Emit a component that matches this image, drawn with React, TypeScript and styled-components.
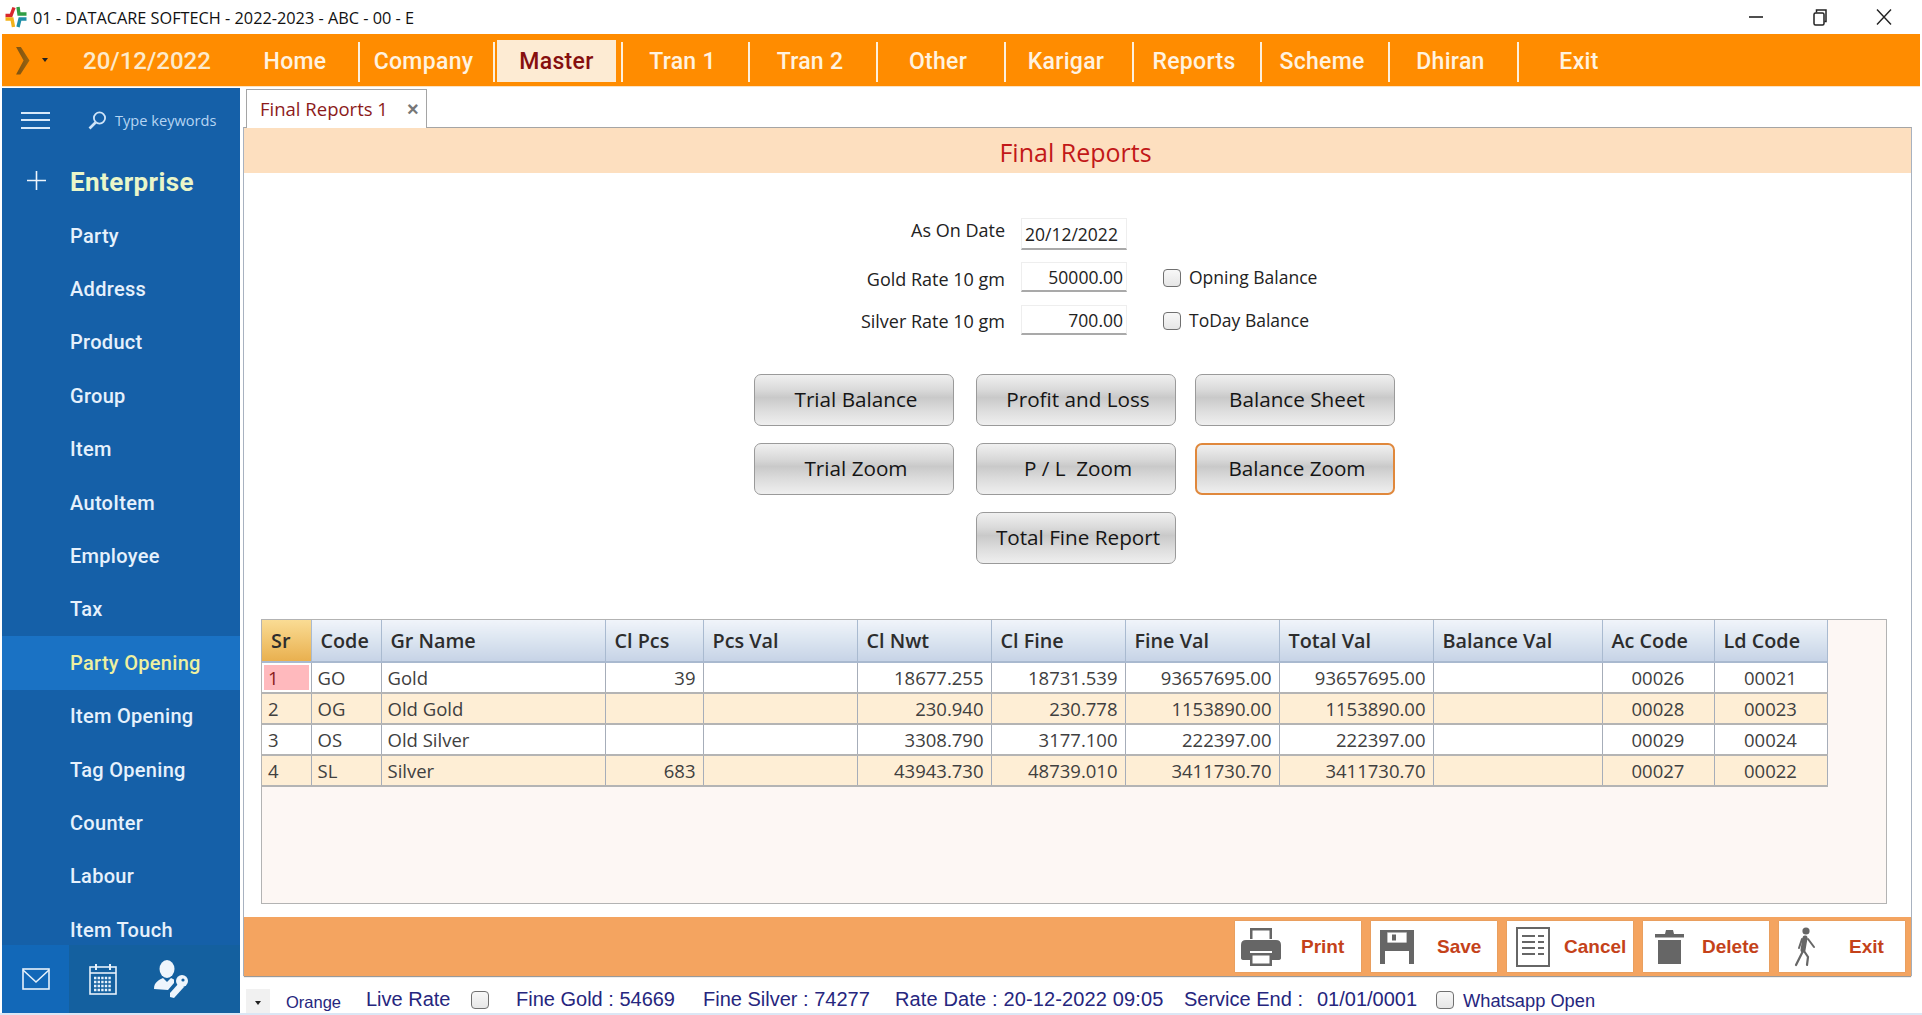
import React from "react";
import styled, { createGlobalStyle, css } from "styled-components";

const Global = createGlobalStyle`
  html, body { margin: 0; padding: 0; background: #fff; }
  #root { width: 1922px; height: 1015px; }
  * { box-sizing: border-box; }
`;

const UI = `"Open Sans", "Liberation Sans", sans-serif`;
const MENU = `Roboto, "Open Sans", sans-serif`;

const Page = styled.div`
  position: relative;
  width: 1922px;
  height: 1015px;
  overflow: hidden;
  background: #fff;
  font-family: ${UI};
`;

/* Title bar */
const TitleBar = styled.div`
  height: 34px;
  display: flex;
  align-items: center;
  padding-left: 4px;
`;
const TitleText = styled.div`
  margin-left: 5px;
  margin-top: 2px;
  font-size: 16.3px;
  color: #111;
  white-space: nowrap;
`;
const WindowControls = styled.div`
  margin-left: auto;
  display: flex;
  align-items: center;
  height: 34px;
  padding-right: 6px;
`;
const WindowButton = styled.div`
  width: 64px;
  display: flex;
  justify-content: center;
  align-items: center;
  color: #222;
`;

/* Menu */
const MenuBar = styled.div`
  margin-left: 2px;
  width: 1918px;
  height: 52px;
  background: #ff8c00;
  display: flex;
  padding-top: 6px;
  box-shadow: 0 1px 0 #fbe3c4;
`;
const Brand = styled.div`
  width: 236px;
  height: 42px;
  display: flex;
  align-items: center;
  padding-left: 13px;
`;
const Caret = styled.div`
  margin-left: 12px;
  margin-top: -2px;
  width: 0;
  height: 0;
  border-left: 3.5px solid transparent;
  border-right: 3.5px solid transparent;
  border-top: 4px solid #222;
`;
const DateText = styled.div`
  margin-left: 35px;
  font-family: ${MENU};
  font-size: 24px;
  font-weight: 500;
  color: #fdeacb;
  white-space: nowrap;
`;
const MenuItem = styled.div<{ $w: number; $last?: boolean }>`
  position: relative;
  width: ${(p) => p.$w}px;
  height: 42px;
  ${(p) =>
    !p.$last &&
    css`
      &::after {
        content: "";
        position: absolute;
        right: 0;
        top: 2px;
        bottom: 0;
        width: 2px;
        background: #fdf0dc;
      }
    `}
`;
const MenuLabel = styled.div<{ $active?: boolean }>`
  height: 42px;
  margin: 0 ${(p) => (p.$active ? 7 : 10)}px 0 2px;
  display: flex;
  align-items: center;
  justify-content: center;
  font-family: ${MENU};
  font-size: 23px;
  font-weight: 500;
  letter-spacing: 0.3px;
  color: ${(p) => (p.$active ? "#860f0f" : "#fff3e0")};
  background: ${(p) => (p.$active ? "#fdebd3" : "transparent")};
`;

/* Body */
const Body = styled.div`
  display: flex;
  margin-top: 2px;
  height: 925px;
`;
const Sidebar = styled.nav`
  margin-left: 2px;
  width: 238px;
  height: 925px;
  background: #1560a8;
  display: flex;
  flex-direction: column;
  font-family: ${MENU};
`;
const SideTop = styled.div`
  height: 64px;
  display: flex;
  align-items: center;
  padding-left: 19px;
`;
const Burger = styled.div`
  width: 29px;
  height: 17px;
  border-top: 2px solid #d8e9fa;
  border-bottom: 2px solid #d8e9fa;
  position: relative;
  &::after {
    content: "";
    position: absolute;
    left: 0;
    right: 0;
    top: 5.5px;
    height: 2px;
    background: #d8e9fa;
  }
`;
const SearchWrap = styled.div`
  margin-left: 38px;
  display: flex;
  align-items: center;
`;
const SearchHint = styled.div`
  margin-left: 8px;
  font-family: ${UI};
  font-size: 14.6px;
  color: #b5d5f3;
  white-space: nowrap;
`;
const GroupRow = styled.div`
  height: 57px;
  display: flex;
  align-items: center;
  padding-left: 25px;
`;
const GroupName = styled.div`
  margin-left: 24px;
  margin-top: 2px;
  font-size: 26px;
  font-weight: 700;
  letter-spacing: 0.4px;
  color: #e9f6c9;
`;
const SideList = styled.div`
  flex: 1;
  overflow: hidden;
`;
const SideItem = styled.div<{ $active?: boolean }>`
  height: 53.4px;
  display: flex;
  align-items: center;
  padding-left: 68px;
  font-size: 20px;
  font-weight: 500;
  letter-spacing: 0.3px;
  color: ${(p) => (p.$active ? "#eef0a0" : "#e6f1fc")};
  background: ${(p) => (p.$active ? "#1a72c4" : "transparent")};
`;
const SideBottom = styled.div`
  height: 68px;
  display: flex;
  background: #14609f;
`;
const SideTile = styled.div<{ $active?: boolean; $nudge?: number }>`
  width: 67px;
  display: flex;
  align-items: center;
  justify-content: center;
  padding-left: ${(p) => p.$nudge ?? 0}px;
  color: #eaf3fc;
  background: ${(p) => (p.$active ? "#1268b8" : "transparent")};
`;

/* Main */
const Main = styled.main`
  flex: 1;
  padding-left: 3px;
  padding-right: 10px;
  display: flex;
  flex-direction: column;
  min-width: 0;
`;
const TabStrip = styled.div`
  height: 39px;
  display: flex;
  padding-left: 3px;
  padding-top: 1px;
`;
const Tab = styled.div`
  width: 181px;
  height: 39px;
  margin-bottom: -1px;
  background: #fff;
  border: 1px solid #a5a5a5;
  border-bottom: none;
  display: flex;
  align-items: center;
  padding-left: 13px;
  position: relative;
  z-index: 1;
`;
const TabText = styled.div`
  font-size: 18.5px;
  color: #8c1a1a;
  white-space: nowrap;
  margin-top: -2px;
`;
const TabClose = styled.div`
  position: absolute;
  left: 160px;
  top: 9px;
  font-family: "Liberation Sans", sans-serif;
  font-size: 20px;
  font-weight: 700;
  line-height: 20px;
  color: #777;
`;
const Panel = styled.section`
  height: 850px;
  border: 1px solid #a8b2c0;
  border-top-color: #a5a5a5;
  border-bottom: none;
  display: flex;
  flex-direction: column;
  background: #fff;
`;
const PanelHeader = styled.div`
  height: 45px;
  flex: none;
  background: #fddfbf;
  display: flex;
  align-items: center;
  justify-content: center;
  font-size: 25px;
  color: #c21818;
  padding: 2px 4px 0 0;
`;
const Form = styled.div`
  margin: 45px 0 0 456px;
  display: grid;
  grid-template-columns: 305px 106px 18px auto;
  grid-template-rows: 44px 43px 31px;
  column-gap: 16px;
  justify-content: start;
`;
const FieldLabel = styled.div<{ $up?: number }>`
  text-align: right;
  font-size: 18px;
  line-height: 24px;
  color: #222;
  white-space: nowrap;
  margin-top: ${(p) => p.$up ?? 3}px;
`;
const FieldBox = styled.div<{ $right?: boolean; $h: number }>`
  width: 106px;
  height: ${(p) => p.$h}px;
  background: #fff;
  border: 1px solid #eeeeee;
  border-bottom: 2px solid #a9a9a9;
  display: flex;
  align-items: center;
  justify-content: ${(p) => (p.$right ? "flex-end" : "flex-start")};
  padding: 0 3px 0 3px;
  font-size: 17.5px;
  color: #222;
`;
const CheckBox = styled.input.attrs({ type: "checkbox" })`
  appearance: none;
  -webkit-appearance: none;
  width: 18px;
  height: 18px;
  margin: 0;
  border: 1.5px solid #707070;
  border-radius: 4px;
  background: linear-gradient(#f8f8f8, #e6e6e6);
`;
const FormCheck = styled(CheckBox)`
  margin-top: 7px;
  margin-left: 20px;
`;
const CheckLabel = styled.div`
  margin-left: 12px;
  margin-top: 3px;
  font-size: 17.5px;
  line-height: 24px;
  color: #222;
  white-space: nowrap;
`;
const ButtonGrid = styled.div`
  margin: 38px 0 0 510px;
  display: grid;
  grid-template-columns: 222px 219px 200px;
  grid-template-rows: 69px 69px 52px;
  justify-content: start;
`;
const ActionButton = styled.div<{ $focus?: boolean; $col?: number }>`
  width: 200px;
  height: 52px;
  grid-column: ${(p) => p.$col ?? "auto"};
  display: flex;
  align-items: center;
  justify-content: center;
  padding: 0 0 2px 4px;
  border: ${(p) => (p.$focus ? "2px solid #e0883c" : "1.5px solid #9a9a9a")};
  border-radius: 7px;
  background: linear-gradient(#f0f0f0 0%, #d9d9d9 30%, #c9c9c9 45%, #dcdcdc 70%, #efefef 100%);
  font-size: 20.7px;
  color: #151515;
  white-space: pre;
`;
const GridBox = styled.div`
  margin: 55px 0 0 17px;
  width: 1626px;
  height: 285px;
  background: #fdf7f4;
  border: 1.5px solid #b3b3b3;
  flex: none;
`;
const GridTable = styled.table`
  border-collapse: collapse;
  table-layout: fixed;
  width: 1565px;
`;
const HeadCell = styled.th<{ $sel?: boolean; $w: number }>`
  width: ${(p) => p.$w}px;
  height: 42px;
  padding: 0 0 0 9px;
  text-align: left;
  font-size: 19.8px;
  font-weight: 600;
  color: #2d2d2d;
  white-space: nowrap;
  border-right: 1px solid #a9bad0;
  border-bottom: 2px solid #a9b9cf;
  background: ${(p) =>
    p.$sel
      ? "linear-gradient(#fadc94, #e9b04f)"
      : "linear-gradient(#f0f4fa, #dde6f1 45%, #c6d3e6)"};
`;
const Row = styled.tr<{ $alt?: boolean }>`
  height: 31px;
  background: ${(p) => (p.$alt ? "#feeed5" : "#ffffff")};
`;
const Cell = styled.td<{ $align?: string; $flag?: boolean }>`
  padding: 1px ${(p) => (p.$align === "right" ? 7 : 6)}px 0 6px;
  text-align: ${(p) => p.$align ?? "left"};
  font-size: 18.5px;
  line-height: 20px;
  color: ${(p) => (p.$flag ? "#8a1c1c" : "#404040")};
  white-space: nowrap;
  border-right: 1px solid #a6adb9;
  border-bottom: 2px solid #b4b4b4;
  ${(p) =>
    p.$flag &&
    css`
      background: #ffb9bd;
      box-shadow: inset 0 0 0 2px #fff;
    `}
`;

/* Footer */
const FooterBar = styled.div`
  margin-top: auto;
  height: 59px;
  flex: none;
  background: #f4a460;
  box-shadow: 0 1px 1px #999;
  display: flex;
  justify-content: flex-end;
  padding: 4px 6px 0 0;
  column-gap: 10px;
`;
const FooterButton = styled.div`
  width: 126px;
  height: 51px;
  background: #fff;
  box-shadow: 0 0 1px #b08a60;
  display: flex;
  align-items: center;
`;
const IconSlot = styled.div`
  width: 52px;
  display: flex;
  justify-content: center;
  color: #666;
`;
const FooterText = styled.div<{ $gap: number }>`
  margin-left: ${(p) => p.$gap}px;
  font-family: "Liberation Sans", sans-serif;
  font-size: 19px;
  font-weight: 700;
  color: #c4421a;
`;
const StatusBar = styled.div`
  height: 37px;
  padding-top: 10px;
  display: grid;
  grid-template-columns: 4px 40px 80px 105px 45px 187px 192px 289px 133px 119px 27px auto;
  align-items: center;
  font-family: "Liberation Sans", sans-serif;
  font-size: 20px;
  color: #26267e;
  white-space: nowrap;
  margin-left: -1px;
`;
const DropButton = styled.div`
  grid-column: 2;
  width: 24px;
  height: 24px;
  margin-top: 2px;
  background: #f1f1f1;
  display: flex;
  align-items: center;
  justify-content: center;
  &::after {
    content: "";
    border-left: 3.5px solid transparent;
    border-right: 3.5px solid transparent;
    border-top: 4px solid #222;
    margin-top: 5px;
  }
`;
const Theme = styled.div`
  font-size: 16.5px;
  margin-top: 6px;
`;
const RateDate = styled.div`
  letter-spacing: 0.14px;
`;
const StatusNote = styled.div`
  font-size: 18.3px;
  margin-top: 3px;
`;
const BottomEdge = styled.div`
  position: absolute;
  left: 0;
  right: 0;
  bottom: 0;
  height: 2px;
  background: #dbe7f5;
`;

const menus = [
  ["Home", 122], ["Company", 135], ["Master", 128], ["Tran 1", 127], ["Tran 2", 128], ["Other", 128],
  ["Karigar", 128], ["Reports", 128], ["Scheme", 128], ["Dhiran", 129], ["Exit", 128],
] as const;
const sideItems = [
  "Party", "Address", "Product", "Group", "Item", "AutoItem", "Employee", "Tax", "Party Opening",
  "Item Opening", "Tag Opening", "Counter", "Labour", "Item Touch",
];
const columns: [string, number][] = [
  ["Sr", 49], ["Code", 70], ["Gr Name", 224], ["Cl Pcs", 98], ["Pcs Val", 154], ["Cl Nwt", 134],
  ["Cl Fine", 134], ["Fine Val", 154], ["Total Val", 154], ["Balance Val", 169], ["Ac Code", 112], ["Ld Code", 113],
];
const rows = [
  ["1", "GO", "Gold", "39", "", "18677.255", "18731.539", "93657695.00", "93657695.00", "", "00026", "00021"],
  ["2", "OG", "Old Gold", "", "", "230.940", "230.778", "1153890.00", "1153890.00", "", "00028", "00023"],
  ["3", "OS", "Old Silver", "", "", "3308.790", "3177.100", "222397.00", "222397.00", "", "00029", "00024"],
  ["4", "SL", "Silver", "683", "", "43943.730", "48739.010", "3411730.70", "3411730.70", "", "00027", "00022"],
];
const alignFor = (i: number) => (i >= 10 ? "center" : i >= 3 && i <= 8 ? "right" : "left");

const Logo = () => (
  <svg width="24" height="24" viewBox="0 0 24 24" fill="none" strokeWidth="3.4">
    <path d="M1.5 10.5 H7 L10 2.5" stroke="#d8262c" />
    <path d="M14 2 L15 9 H22.5" stroke="#2f9e44" />
    <path d="M1.5 14 H8 L9.5 22" stroke="#f2b21b" />
    <path d="M22.5 14 H16 L14 22" stroke="#1f8fa8" />
  </svg>
);
const Chevron = () => (
  <svg width="15" height="28" viewBox="0 0 14 28" preserveAspectRatio="none">
    <defs>
      <linearGradient id="chev" x1="0" x2="1" y1="0" y2="0">
        <stop offset="0" stopColor="#7d5212" />
        <stop offset="1" stopColor="#9a6410" />
      </linearGradient>
    </defs>
    <path d="M1 0 H5.5 L13.5 13.5 L5 27.5 H1 L8 13.5 Z" fill="url(#chev)" />
  </svg>
);
const SearchIcon = () => (
  <svg width="19" height="19" viewBox="0 0 19 19" fill="none" stroke="#cfe4f8">
    <circle cx="11.5" cy="7" r="5.6" strokeWidth="1.8" />
    <path d="M7.5 11.5 L1.5 17.5" strokeWidth="2.6" />
  </svg>
);
const Plus = () => (
  <svg width="19" height="19" viewBox="0 0 19 19" stroke="#eef5fc" strokeWidth="1.6">
    <path d="M9.5 0 V19 M0 9.5 H19" />
  </svg>
);
const MailIcon = () => (
  <svg width="28" height="24" viewBox="0 0 28 24" fill="none" stroke="#e6f1fb" strokeWidth="1.6">
    <rect x="1" y="2" width="26" height="20" />
    <path d="M1 3 L14 15 L27 3" />
  </svg>
);
const CalendarIcon = () => (
  <svg width="28" height="32" viewBox="0 0 28 32" fill="none" stroke="#e6f1fb">
    <rect x="1" y="4" width="26" height="27" strokeWidth="1.6" />
    <path d="M1 10 H27" strokeWidth="1.6" />
    <path d="M7 1 V7 M21 1 V7" strokeWidth="2" />
    <path d="M5 15 H23 M5 19 H23 M5 23 H23 M5 27 H23" strokeWidth="2.4" strokeDasharray="2.4 1.2" />
  </svg>
);
const UserKeyIcon = () => (
  <svg width="38" height="38" viewBox="0 0 38 38" fill="#eef5fc">
    <ellipse cx="14" cy="9" rx="7.5" ry="9" />
    <path d="M1 29 C1 22 6 20 10 18 L14 22 L18 18 L21 19.5 L21 23 L15 30 Z" />
    <circle cx="29" cy="21" r="6" />
    <path d="M26 23 L31 27 L21 38 L17 37 L17 33 Z" />
    <circle cx="30" cy="20" r="1.6" fill="#14609f" />
  </svg>
);
const PrinterIcon = () => (
  <svg width="40" height="40" viewBox="0 0 40 40">
    <path d="M9 1 H31 V12 H28.5 V3.5 H11.5 V12 H9 Z" fill="#666" />
    <path d="M5 13 H35 Q40 13 40 18 V31 Q40 33 37 33 H31 V24 H9 V33 H3 Q0 33 0 31 V18 Q0 13 5 13 Z" fill="#666" />
    <path d="M9 26 H31 V39 H9 Z M11.5 28.5 V36.5 H28.5 V28.5 Z" fill="#666" fillRule="evenodd" />
  </svg>
);
const SaveIcon = () => (
  <svg width="34" height="34" viewBox="0 0 34 34">
    <path fill="#666" fillRule="evenodd" d="M0 0 H34 V34 H0 Z M7 2.5 V13 H27 V2.5 Z M5 21 V34 H29 V21 Z" />
    <rect x="12" y="4.5" width="4" height="6" fill="#666" />
    <path d="M7 2.5 V13 H27 V2.5" fill="none" stroke="#666" strokeWidth="0.8" />
  </svg>
);
const CancelIcon = () => (
  <svg width="34" height="40" viewBox="0 0 34 40" fill="none" stroke="#666">
    <rect x="1" y="1" width="32" height="38" strokeWidth="2" />
    <path d="M6 9 H19 M22 9 H28 M6 15 H19 M22 15 H28 M6 21 H19 M22 21 H28 M6 27 H19 M22 27 H28" strokeWidth="2" />
  </svg>
);
const TrashIcon = () => (
  <svg width="29" height="34" viewBox="0 0 29 34" fill="#666">
    <path d="M0 4 H10 L11 0 H18 L19 4 H29 V7.5 H0 Z" />
    <path d="M3 10 H26 V34 H3 Z" />
  </svg>
);
const WalkIcon = () => (
  <svg width="23" height="40" viewBox="0 0 23 40" fill="none" stroke="#666" strokeLinecap="round">
    <circle cx="12" cy="4" r="3.6" fill="#666" stroke="none" />
    <path d="M11 11 L9 23" strokeWidth="5" />
    <path d="M9 24 L2 38" strokeWidth="2.2" />
    <path d="M10 24 L14 30 L13 38" strokeWidth="2.2" />
    <path d="M8 12 L5 21" strokeWidth="2" />
    <path d="M14 12 L20 20" strokeWidth="2" />
  </svg>
);

export default function App() {
  return (
    <Page>
      <Global />
      <TitleBar>
        <Logo />
        <TitleText>01 - DATACARE SOFTECH - 2022-2023 - ABC - 00 - E</TitleText>
        <WindowControls>
          <WindowButton>
            <svg width="16" height="12" viewBox="0 0 16 12" stroke="#222" strokeWidth="1.6">
              <path d="M1 6 H15" />
            </svg>
          </WindowButton>
          <WindowButton>
            <svg width="14" height="17" viewBox="0 0 14 17" fill="none" stroke="#222" strokeWidth="1.5">
              <rect x="1" y="4" width="10" height="12" rx="1.5" />
              <path d="M3.5 3.5 V1 H13 V12.5 H11.5" />
            </svg>
          </WindowButton>
          <WindowButton>
            <svg width="16" height="16" viewBox="0 0 16 16" stroke="#222" strokeWidth="1.4">
              <path d="M1 0.5 L15 15.5 M15 0.5 L1 15.5" />
            </svg>
          </WindowButton>
        </WindowControls>
      </TitleBar>
      <MenuBar>
        <Brand>
          <Chevron />
          <Caret />
          <DateText>20/12/2022</DateText>
        </Brand>
        {menus.map(([label, w], i) => (
          <MenuItem key={label} $w={w} $last={i === menus.length - 1}>
            <MenuLabel $active={label === "Master"}>{label}</MenuLabel>
          </MenuItem>
        ))}
      </MenuBar>
      <Body>
        <Sidebar>
          <SideTop>
            <Burger />
            <SearchWrap>
              <SearchIcon />
              <SearchHint>Type keywords</SearchHint>
            </SearchWrap>
          </SideTop>
          <GroupRow>
            <Plus />
            <GroupName>Enterprise</GroupName>
          </GroupRow>
          <SideList>
            {sideItems.map((s) => (
              <SideItem key={s} $active={s === "Party Opening"}>
                {s}
              </SideItem>
            ))}
          </SideList>
          <SideBottom>
            <SideTile $active>
              <MailIcon />
            </SideTile>
            <SideTile>
              <CalendarIcon />
            </SideTile>
            <SideTile $nudge={4}>
              <UserKeyIcon />
            </SideTile>
          </SideBottom>
        </Sidebar>
        <Main>
          <TabStrip>
            <Tab>
              <TabText>Final Reports 1</TabText>
              <TabClose>×</TabClose>
            </Tab>
          </TabStrip>
          <Panel>
            <PanelHeader>Final Reports</PanelHeader>
            <Form>
              <FieldLabel $up={0}>As On Date</FieldLabel>
              <FieldBox $h={32}>20/12/2022</FieldBox>
              <span />
              <span />
              <FieldLabel $up={5}>Gold Rate 10 gm</FieldLabel>
              <FieldBox $h={30} $right>50000.00</FieldBox>
              <FormCheck />
              <CheckLabel>Opning Balance</CheckLabel>
              <FieldLabel $up={4}>Silver Rate 10 gm</FieldLabel>
              <FieldBox $h={30} $right>700.00</FieldBox>
              <FormCheck />
              <CheckLabel>ToDay Balance</CheckLabel>
            </Form>
            <ButtonGrid>
              <ActionButton>Trial Balance</ActionButton>
              <ActionButton>Profit and Loss</ActionButton>
              <ActionButton>Balance Sheet</ActionButton>
              <ActionButton>Trial Zoom</ActionButton>
              <ActionButton>{"P / L  Zoom"}</ActionButton>
              <ActionButton $focus>Balance Zoom</ActionButton>
              <ActionButton $col={2}>Total Fine Report</ActionButton>
            </ButtonGrid>
            <GridBox>
              <GridTable>
                <thead>
                  <tr>
                    {columns.map(([name, w], i) => (
                      <HeadCell key={name} $w={w} $sel={i === 0}>
                        {name}
                      </HeadCell>
                    ))}
                  </tr>
                </thead>
                <tbody>
                  {rows.map((r, ri) => (
                    <Row key={r[0]} $alt={ri % 2 === 1}>
                      {r.map((v, ci) => (
                        <Cell key={ci} $align={alignFor(ci)} $flag={ri === 0 && ci === 0}>
                          {v}
                        </Cell>
                      ))}
                    </Row>
                  ))}
                </tbody>
              </GridTable>
            </GridBox>
            <FooterBar>
              <FooterButton>
                <IconSlot><PrinterIcon /></IconSlot>
                <FooterText $gap={14}>Print</FooterText>
              </FooterButton>
              <FooterButton>
                <IconSlot><SaveIcon /></IconSlot>
                <FooterText $gap={14}>Save</FooterText>
              </FooterButton>
              <FooterButton>
                <IconSlot><CancelIcon /></IconSlot>
                <FooterText $gap={5}>Cancel</FooterText>
              </FooterButton>
              <FooterButton>
                <IconSlot><TrashIcon /></IconSlot>
                <FooterText $gap={7}>Delete</FooterText>
              </FooterButton>
              <FooterButton>
                <IconSlot><WalkIcon /></IconSlot>
                <FooterText $gap={18}>Exit</FooterText>
              </FooterButton>
            </FooterBar>
          </Panel>
          <StatusBar>
            <DropButton />
            <Theme>Orange</Theme>
            <div>Live Rate</div>
            <CheckBox />
            <div>Fine Gold : 54669</div>
            <div>Fine Silver : 74277</div>
            <RateDate>Rate Date : 20-12-2022 09:05</RateDate>
            <div>Service End :</div>
            <div>01/01/0001</div>
            <CheckBox />
            <StatusNote>Whatsapp Open</StatusNote>
          </StatusBar>
        </Main>
      </Body>
      <BottomEdge />
    </Page>
  );
}
